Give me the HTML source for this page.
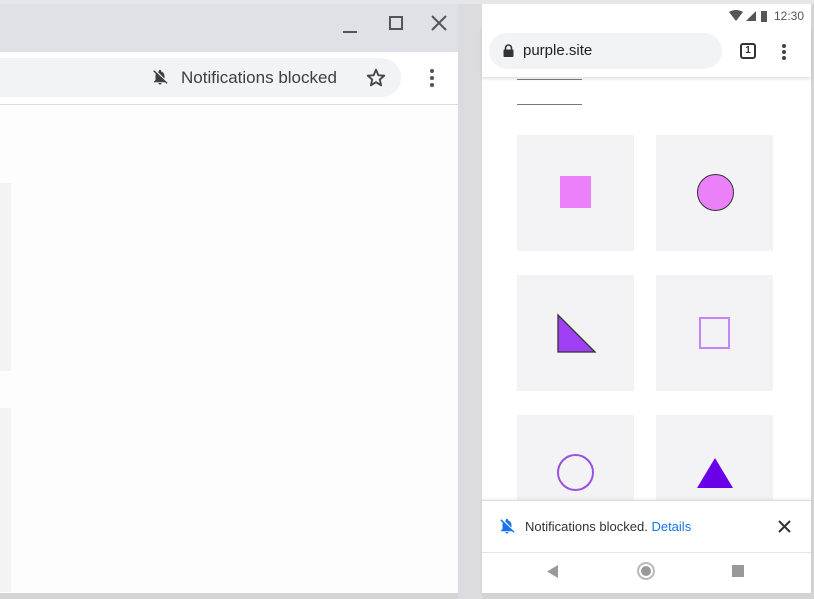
<!DOCTYPE html>
<html><head><style>
*{margin:0;padding:0;box-sizing:border-box}
body{width:814px;height:599px;overflow:hidden;background:#dcdce0;font-family:"Liberation Sans",sans-serif;position:relative}
.a{position:absolute}
</style></head><body>
<!-- desktop window -->
<div class="a" style="left:0;top:4px;width:458px;height:589px;background:#fdfdfd"></div>
<div class="a" style="left:0;top:4px;width:458px;height:48px;background:#dee1e6"></div>
<div class="a" style="left:343px;top:31px;width:14px;height:2px;background:#555"></div>
<div class="a" style="left:389px;top:16px;width:14px;height:14px;border:2px solid #555"></div>
<svg class="a" style="left:431px;top:15px" width="16" height="16"><path d="M1 1L15 15M15 1L1 15" stroke="#555" stroke-width="2"/></svg>
<div class="a" style="left:0;top:52px;width:458px;height:52px;background:#fff"></div>
<div class="a" style="left:0;top:58px;width:401px;height:39px;background:#f1f3f4;border-radius:0 20px 20px 0"></div>
<svg class="a" style="left:151px;top:68px" width="18" height="18" viewBox="0 0 24 24"><path d="M12 22a2 2 0 0 0 2-2h-4a2 2 0 0 0 2 2zm6-6v-5c0-3-1.6-5.6-4.5-6.3V4a1.5 1.5 0 0 0-3 0v.7c-.5.1-1 .3-1.4.5L18 14.2V16zM4.3 3 3 4.3 6.3 7.6C6.1 8.7 6 9.8 6 11v5l-2 2v1h14.7l2 2L22 19.7z" fill="#3c4043"/></svg>
<div class="a" style="left:181px;top:68px;font-size:17px;color:#3c4043">Notifications blocked</div>
<svg class="a" style="left:365px;top:67px" width="22" height="22" viewBox="0 0 24 24"><path d="M12 3l2.6 6 6.4.5-4.9 4.2 1.5 6.3L12 16.6 6.4 20l1.5-6.3L3 9.5 9.4 9z" fill="none" stroke="#444" stroke-width="2" stroke-linejoin="round"/></svg>
<div class="a" style="left:430px;top:69px;width:4px;height:4px;border-radius:2px;background:#555;box-shadow:0 7px 0 #555,0 14px 0 #555"></div>
<div class="a" style="left:0;top:104px;width:458px;height:1px;background:#dadce0"></div>
<div class="a" style="left:0;top:183px;width:11px;height:188px;background:#f3f3f3"></div>
<div class="a" style="left:0;top:408px;width:11px;height:184px;background:#f3f3f3"></div>
<div class="a" style="left:0;top:593px;width:458px;height:6px;background:#d4d4d4"></div>
<!-- phone -->
<div class="a" style="left:482px;top:4px;width:329px;height:589px;background:#fff"></div>
<div class="a" style="left:482px;top:593px;width:332px;height:6px;background:#d4d4d4"></div>
<div class="a" style="left:811px;top:0;width:3px;height:599px;background:#d4d4d4"></div>
<div class="a" style="left:0;top:0;width:814px;height:4px;background:#e6e6e9"></div>
<svg class="a" style="left:729px;top:10px" width="42" height="12"><path d="M0 2Q7-2 14 2L7 11z" fill="#555"/><path d="M17 11L27 1V11z" fill="#555"/><rect x="32" y="1" width="6" height="11" fill="#555"/></svg>
<div class="a" style="left:774px;top:9px;font-size:12px;color:#555">12:30</div>
<div class="a" style="left:482px;top:26px;width:329px;height:51px;background:#fff;box-shadow:0 2px 3px rgba(0,0,0,.12)"></div>
<div class="a" style="left:489px;top:33px;width:233px;height:36px;background:#f1f3f4;border-radius:18px"></div>
<svg class="a" style="left:503px;top:44px" width="11" height="13"><path d="M2.5 6V4a3 3 0 0 1 6 0v2" stroke="#333" stroke-width="1.6" fill="none"/><rect x="0.5" y="5.5" width="10" height="7.5" rx="1" fill="#333"/></svg>
<div class="a" style="left:523px;top:42px;font-size:15px;color:#202124">purple.site</div>
<div class="a" style="left:740px;top:43px;width:16px;height:16px;border:2px solid #333;border-radius:3px;font-size:10px;font-weight:bold;text-align:center;line-height:12px;color:#333">1</div>
<div class="a" style="left:782px;top:44px;width:4px;height:4px;border-radius:2px;background:#444;box-shadow:0 6px 0 #444,0 12px 0 #444"></div>
<div class="a" style="left:517px;top:79px;width:65px;height:1px;background:#777"></div>
<div class="a" style="left:517px;top:104px;width:65px;height:1px;background:#777"></div>
<div class="a" style="left:517px;top:135px;width:117px;height:116px;background:#f3f3f5"></div>
<div class="a" style="left:656px;top:135px;width:117px;height:116px;background:#f3f3f5"></div>
<div class="a" style="left:517px;top:275px;width:117px;height:116px;background:#f3f3f5"></div>
<div class="a" style="left:656px;top:275px;width:117px;height:116px;background:#f3f3f5"></div>
<div class="a" style="left:517px;top:415px;width:117px;height:90px;background:#f3f3f5"></div>
<div class="a" style="left:656px;top:415px;width:117px;height:90px;background:#f3f3f5"></div>
<div class="a" style="left:560px;top:176px;width:31px;height:32px;background:#eb80f8"></div>
<div class="a" style="left:697px;top:174px;width:37px;height:37px;border-radius:50%;background:#eb80f8;border:1.5px solid #333"></div>
<svg class="a" style="left:556px;top:313px" width="42" height="41"><path d="M2 2L39 39H2z" fill="#a040f5" stroke="#333" stroke-width="1.3"/></svg>
<div class="a" style="left:699px;top:317px;width:31px;height:32px;border:2px solid #c386f2"></div>
<div class="a" style="left:557px;top:454px;width:37px;height:37px;border-radius:50%;border:2px solid #9a50e0"></div>
<svg class="a" style="left:696px;top:457px" width="38" height="32"><path d="M19 1L37 31H1z" fill="#6a00e8"/></svg>
<div class="a" style="left:482px;top:500px;width:329px;height:93px;background:#fff;border-top:1px solid #ddd;box-shadow:0 -1px 3px rgba(0,0,0,.08)"></div>
<svg class="a" style="left:498px;top:517px" width="18" height="18" viewBox="0 0 24 24"><path d="M12 22a2 2 0 0 0 2-2h-4a2 2 0 0 0 2 2zm6-6v-5c0-3-1.6-5.6-4.5-6.3V4a1.5 1.5 0 0 0-3 0v.7c-.5.1-1 .3-1.4.5L18 14.2V16zM4.3 3 3 4.3 6.3 7.6C6.1 8.7 6 9.8 6 11v5l-2 2v1h14.7l2 2L22 19.7z" fill="#1a73e8"/></svg>
<div class="a" style="left:525px;top:519px;font-size:13px;color:#333">Notifications blocked. <span style="color:#1a73e8">Details</span></div>
<svg class="a" style="left:778px;top:520px" width="13" height="13"><path d="M1 1L12 12M12 1L1 12" stroke="#333" stroke-width="2"/></svg>
<div class="a" style="left:482px;top:552px;width:329px;height:1px;background:#e4e4e4"></div>
<svg class="a" style="left:547px;top:565px" width="12" height="13"><path d="M11 0V13L0 6.5z" fill="#999"/></svg>
<div class="a" style="left:637px;top:562px;width:18px;height:18px;border-radius:50%;border:2px solid #bbb;background:#999;box-shadow:inset 0 0 0 2px #fff"></div>
<div class="a" style="left:732px;top:565px;width:12px;height:12px;background:#999"></div>
</body></html>
